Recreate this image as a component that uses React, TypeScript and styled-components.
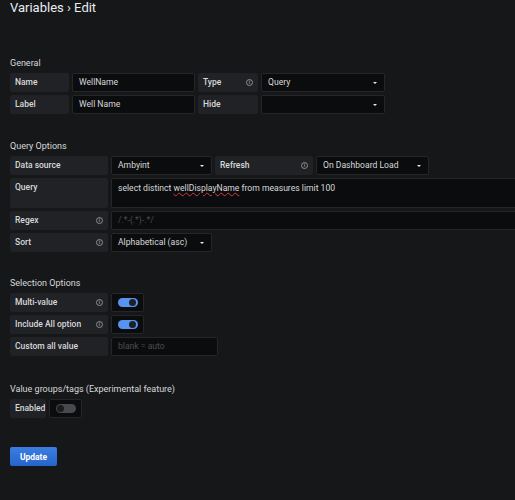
import React from "react";
import styled, { createGlobalStyle } from "styled-components";

const GlobalStyle = createGlobalStyle`
  html, body {
    margin: 0;
    padding: 0;
    background: #161719;
    overflow: hidden;
  }
  body {
    font-family: Roboto, "Liberation Sans", sans-serif;
    color: #d8d9da;
  }
`;

export default function App() {
  return (
    <>
      <GlobalStyle />
      <Page>
        <Title>Variables › Edit</Title>

        <Section $top={41}>
          <SectionTitle>General</SectionTitle>
          <Row>
            <Label $w={59}>Name</Label>
            <Input $w={123}>WellName</Input>
            <Label $w={60} $info>
              Type
            </Label>
            <Select $w={124}>Query</Select>
          </Row>
          <Row>
            <Label $w={59}>Label</Label>
            <Input $w={123}>Well Name</Input>
            <Label $w={60}>Hide</Label>
            <Select $w={124} />
          </Row>
        </Section>

        <Section $top={25}>
          <SectionTitle>Query Options</SectionTitle>
          <Row>
            <Label $w={98}>Data source</Label>
            <Select $w={101}>Ambyint</Select>
            <Label $w={98} $info>
              Refresh
            </Label>
            <Select $w={113}>On Dashboard Load</Select>
          </Row>
          <Row $h={30}>
            <Label $w={98}>Query</Label>
            <Input $fill $top>
              select distinct <Misspelled>wellDisplayName</Misspelled> from
              measures limit 100
            </Input>
          </Row>
          <Row>
            <Label $w={98} $info>
              Regex
            </Label>
            <Input $fill $placeholder>
              /.*-(.*)-.*/
            </Input>
          </Row>
          <Row>
            <Label $w={98} $info>
              Sort
            </Label>
            <Select $w={101}>Alphabetical (asc)</Select>
          </Row>
        </Section>

        <Section $top={24}>
          <SectionTitle>Selection Options</SectionTitle>
          <Row>
            <Label $w={98} $info>
              Multi-value
            </Label>
            <Switch on />
          </Row>
          <Row>
            <Label $w={98} $info>
              Include All option
            </Label>
            <Switch on />
          </Row>
          <Row>
            <Label $w={98}>Custom all value</Label>
            <Input $w={107} $placeholder>
              blank = auto
            </Input>
          </Row>
        </Section>

        <Section $top={26}>
          <SectionTitle>Value groups/tags (Experimental feature)</SectionTitle>
          <Row>
            <Label $w={36}>Enabled</Label>
            <Switch on={false} />
          </Row>
        </Section>

        <UpdateButton>Update</UpdateButton>
      </Page>
    </>
  );
}

function Switch({ on }: { on: boolean }) {
  return (
    <SwitchBox>
      <Track $on={on}>
        <Knob $on={on} />
      </Track>
    </SwitchBox>
  );
}

const Page = styled.div`
  padding: 0 0 0 10px;
  width: 100%;
  box-sizing: border-box;
`;

const Title = styled.h1`
  margin: 0;
  font-size: 13px;
  line-height: 16px;
  font-weight: 400;
  color: #e9edf2;
`;

const Section = styled.section<{ $top: number }>`
  margin-top: ${(p) => p.$top}px;
  display: flex;
  flex-direction: column;
  gap: 2px;
`;

const SectionTitle = styled.h3`
  margin: 0 0 2px;
  font-size: 9px;
  line-height: 12px;
  font-weight: 400;
  color: #d8d9da;
`;

const Row = styled.div<{ $h?: number }>`
  display: flex;
  gap: 3px;
  height: ${(p) => p.$h ?? 19}px;
  margin-bottom: 1px;
`;

const Label = styled.div<{ $w: number; $info?: boolean }>`
  position: relative;
  flex: none;
  width: ${(p) => p.$w}px;
  box-sizing: border-box;
  height: 100%;
  padding: 0 5px;
  background: #202226;
  border-radius: 2px;
  font-size: 8.5px;
  font-weight: 500;
  line-height: 19px;
  color: #d8d9da;
  white-space: nowrap;
  ${(p) =>
    p.$info &&
    `
    &::after {
      content: "i";
      position: absolute;
      right: 5px;
      top: 6px;
      width: 5px;
      height: 5px;
      border: 1px solid #8e8e8e;
      border-radius: 50%;
      font-size: 5px;
      line-height: 5px;
      text-align: center;
      color: #8e8e8e;
      font-weight: 700;
    }
  `}
`;

const Input = styled.div<{
  $w?: number;
  $fill?: boolean;
  $top?: boolean;
  $placeholder?: boolean;
}>`
  flex: ${(p) => (p.$fill ? "1" : "none")};
  width: ${(p) => (p.$w ? `${p.$w}px` : "auto")};
  min-width: 0;
  box-sizing: border-box;
  height: 100%;
  padding: ${(p) => (p.$top ? "3px 6px" : "0 6px")};
  background: #0b0c0e;
  border: 1px solid #262628;
  border-radius: 2px;
  ${(p) => p.$fill && "border-right: none; border-radius: 2px 0 0 2px;"}
  font-size: 8.6px;
  line-height: ${(p) => (p.$top ? "12px" : "17px")};
  color: ${(p) => (p.$placeholder ? "#4b4c50" : "#d8d9da")};
  white-space: nowrap;
  overflow: hidden;
`;

const Misspelled = styled.span`
  text-decoration: underline wavy #d4383c;
  text-decoration-thickness: 1px;
  text-underline-offset: 1px;
`;

const Select = styled.div<{ $w: number }>`
  position: relative;
  flex: none;
  width: ${(p) => p.$w}px;
  box-sizing: border-box;
  height: 100%;
  padding: 0 6px;
  background: #0b0c0e;
  border: 1px solid #262628;
  border-radius: 2px;
  font-size: 8.6px;
  line-height: 17px;
  color: #d8d9da;
  white-space: nowrap;
  &::after {
    content: "";
    position: absolute;
    right: 7px;
    top: 8px;
    border-left: 2px solid transparent;
    border-right: 2px solid transparent;
    border-top: 2px solid #e9edf2;
  }
`;

const SwitchBox = styled.div`
  flex: none;
  width: 33px;
  height: 100%;
  box-sizing: border-box;
  background: #0b0c0e;
  border: 1px solid #262628;
  border-radius: 2px;
  display: flex;
  align-items: center;
  justify-content: center;
`;

const Track = styled.div<{ $on: boolean }>`
  width: 20px;
  height: 9px;
  border-radius: 5px;
  background: ${(p) => (p.$on ? "#5794f2" : "#48494d")};
  display: flex;
  align-items: center;
  justify-content: ${(p) => (p.$on ? "flex-end" : "flex-start")};
  padding: 0 1.5px;
  box-sizing: border-box;
`;

const Knob = styled.div<{ $on: boolean }>`
  width: 7px;
  height: 7px;
  border-radius: 50%;
  background: ${(p) => (p.$on ? "#1f2024" : "#1b1c1f")};
`;

const UpdateButton = styled.button`
  display: block;
  margin-top: 28px;
  width: 47px;
  height: 19px;
  padding: 0;
  border: none;
  border-radius: 2px;
  background: linear-gradient(#3b7ee0, #2664cc);
  color: #fff;
  font-family: Roboto, "Liberation Sans", sans-serif;
  font-size: 8.5px;
  font-weight: 700;
  cursor: pointer;
`;
